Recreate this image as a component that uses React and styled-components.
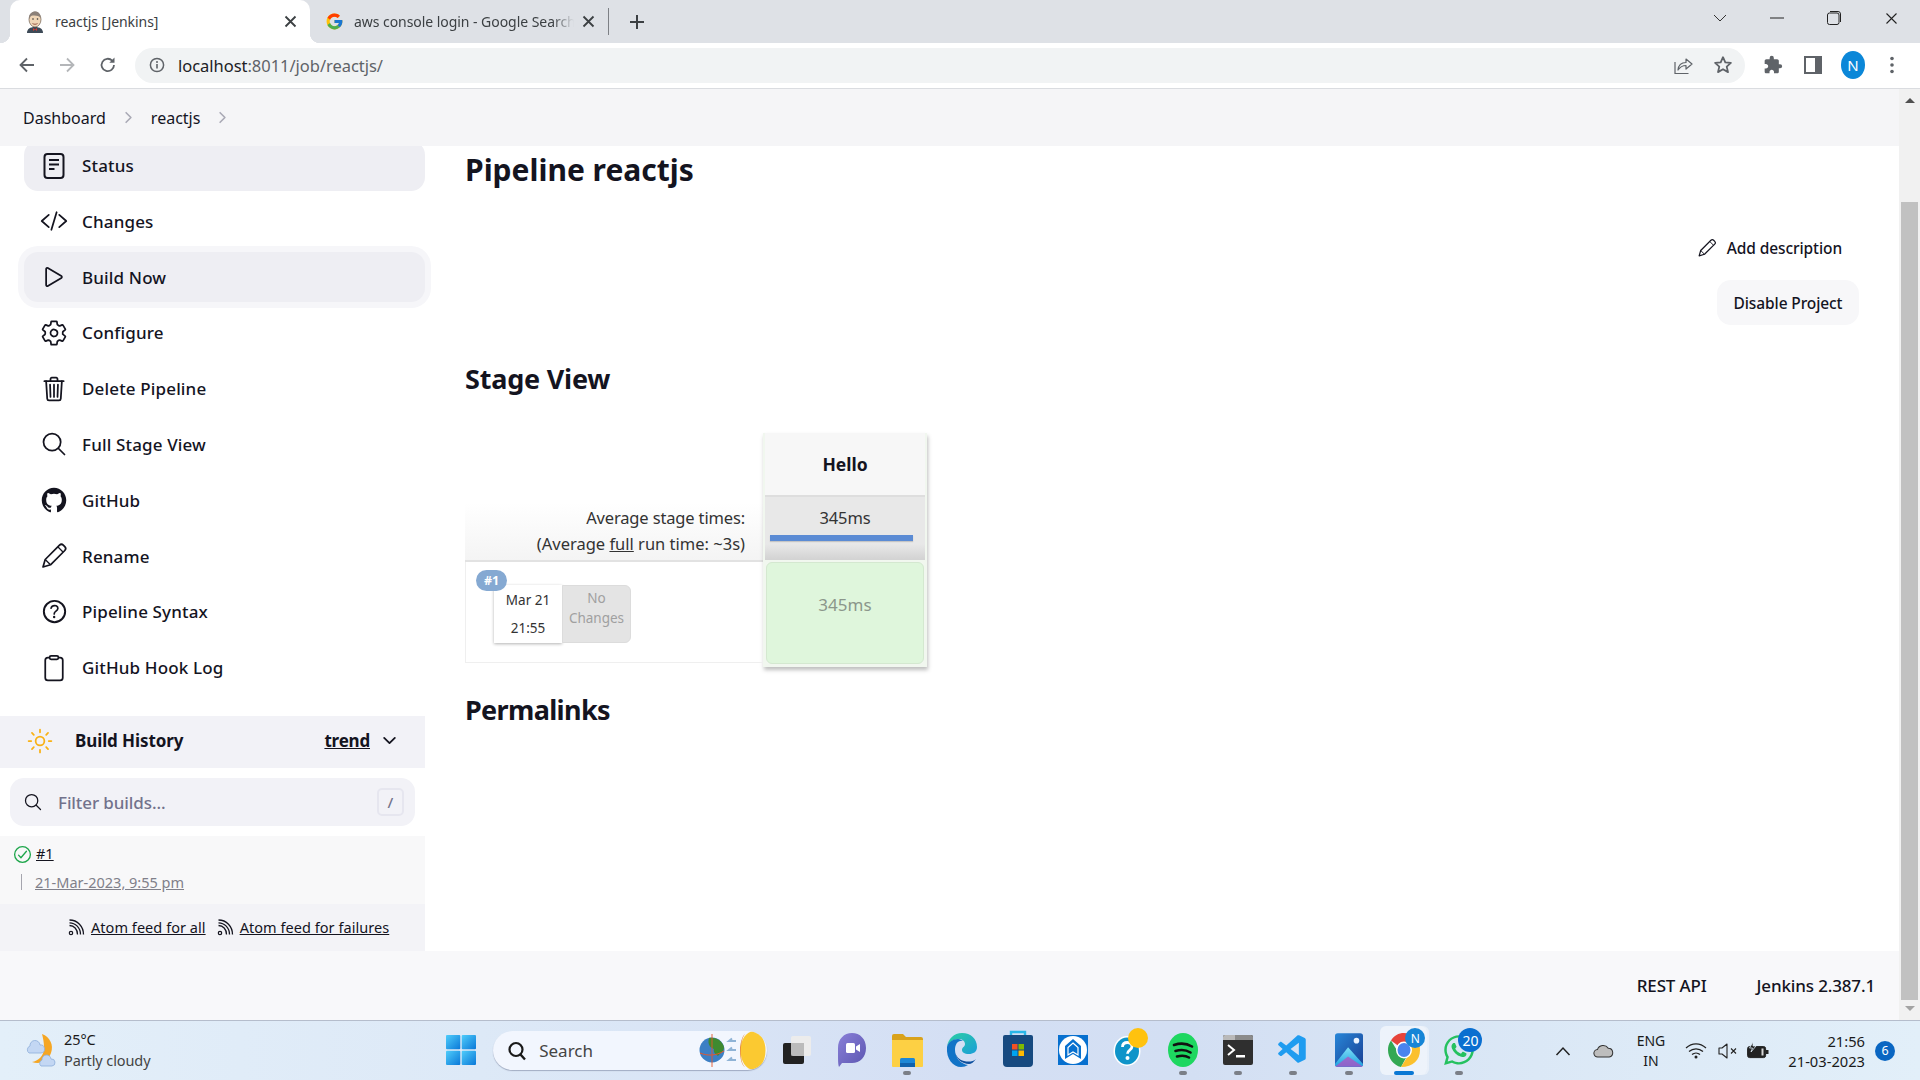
import React from "react";
import styled, { createGlobalStyle } from "styled-components";
import {
  IoCodeSlashOutline,
  IoPlayOutline,
  IoSettingsOutline,
  IoTrashOutline,
  IoSearchOutline,
  IoLogoGithub,
  IoHelpCircleOutline,
  IoClipboardOutline,
  IoChevronDownOutline,
  IoChevronForwardOutline,
  IoSunnyOutline,
  IoCheckmarkCircleOutline,
} from "react-icons/io5";
import { FcGoogle } from "react-icons/fc";
import { FaWhatsapp } from "react-icons/fa";
import { VscVscode } from "react-icons/vsc";

const FONT = `"Noto Sans", "Open Sans", Arial, sans-serif`;

const GlobalStyle = createGlobalStyle`
  html, body { margin: 0; padding: 0; background: #fff; }
  body { font-family: ${FONT}; color: #14141f; }
  * { box-sizing: border-box; }
`;

const Screen = styled.div`
  width: 1920px;
  height: 1080px;
  display: flex;
  flex-direction: column;
  overflow: hidden;
`;

/* browser chrome */
const TabStrip = styled.div`
  height: 43px;
  flex: none;
  background: #dee1e6;
  display: flex;
  align-items: center;
  padding-left: 10px;
  color: #3c4043;
`;

const Tab = styled.div`
  position: relative;
  width: ${(p) => p.$w}px;
  height: 43px;
  flex: none;
  display: flex;
  align-items: center;
  padding-left: ${(p) => p.$pad}px;
  font-size: 14px;
  letter-spacing: -0.05px;
  background: ${(p) => (p.$active ? "#fff" : "transparent")};
  border-radius: 10px 10px 0 0;
  ${(p) =>
    p.$active &&
    `
    &::before, &::after {
      content: "";
      position: absolute;
      bottom: 0;
      width: 10px;
      height: 10px;
    }
    &::before { left: -10px; background: radial-gradient(circle at 0 0, transparent 10px, #fff 10.5px); }
    &::after { right: -10px; background: radial-gradient(circle at 100% 0, transparent 10px, #fff 10.5px); }
  `}
`;

const TabIcon = styled.span`
  width: 20px;
  height: 20px;
  flex: none;
  display: flex;
  align-items: center;
  justify-content: center;
  margin-right: 10px;
`;

const TabTitle = styled.span`
  width: ${(p) => p.$w}px;
  white-space: nowrap;
  overflow: hidden;
  mask-image: ${(p) => (p.$fade ? "linear-gradient(90deg, #000 90%, transparent)" : "none")};
`;

const TabClose = styled.span`
  position: absolute;
  right: ${(p) => p.$r}px;
  top: 14px;
  width: 15px;
  height: 15px;
  display: flex;
`;

const TabDivider = styled.div`
  width: 1px;
  height: 27px;
  background: #7d8085;
  margin-left: -1px;
`;

const NewTab = styled.div`
  width: 18px;
  height: 18px;
  margin-left: 19px;
  display: flex;
`;

const WindowControls = styled.div`
  margin-left: auto;
  display: flex;
  align-items: center;
  height: 36px;
  align-self: flex-start;
`;

const WinButton = styled.span`
  width: ${(p) => p.$w || 57}px;
  display: flex;
  justify-content: center;
`;

const Toolbar = styled.div`
  height: 46px;
  flex: none;
  background: #fff;
  border-bottom: 1px solid #dadce0;
  display: flex;
  align-items: center;
  padding-left: 17px;
  padding-bottom: 1px;
`;

const NavButton = styled.span`
  width: ${(p) => p.$w}px;
  display: flex;
  align-items: center;
`;

const Omnibox = styled.div`
  width: 1610px;
  height: 35px;
  border-radius: 18px;
  background: #f1f3f4;
  display: flex;
  align-items: center;
  padding-left: 14px;
  font-size: 16.5px;
  letter-spacing: -0.03px;
  color: #5f6368;
`;

const UrlText = styled.span`
  margin-left: 13px;
`;

const Host = styled.span`
  color: #202124;
`;

const OmniRight = styled.div`
  margin-left: auto;
  display: flex;
  align-items: center;
  gap: 20px;
  padding-right: 12px;
`;

const ToolIcons = styled.div`
  display: flex;
  align-items: center;
  margin-left: 16px;
`;

const ToolSlot = styled.span`
  width: ${(p) => p.$w}px;
  display: flex;
  justify-content: center;
  align-items: center;
`;

const Avatar = styled.span`
  width: 28px;
  height: 28px;
  border-radius: 50%;
  background: #0b87d8;
  color: #fff;
  font-size: 15px;
  display: flex;
  align-items: center;
  justify-content: center;
`;

/* jenkins page */
const Viewport = styled.div`
  flex: 1;
  min-height: 0;
  display: flex;
`;

const Page = styled.div`
  flex: 1;
  min-width: 0;
  display: flex;
  flex-direction: column;
`;

const Scrollbar = styled.div`
  width: 21px;
  flex: none;
  background: #f1f1f1;
  display: flex;
  flex-direction: column;
  align-items: center;
  padding-top: 9px;
`;

const ScrollArrow = styled.div`
  width: 0;
  height: 0;
  border-left: 5px solid transparent;
  border-right: 5px solid transparent;
  ${(p) => (p.$down ? "border-top: 5px solid #a3a3a3;" : "border-bottom: 5px solid #505050;")}
`;

const ScrollThumb = styled.div`
  width: 17px;
  height: 798px;
  margin-top: 99px;
  margin-bottom: 6px;
  background: #c1c1c1;
`;

const Breadcrumbs = styled.div`
  height: 57px;
  flex: none;
  position: relative;
  z-index: 2;
  background: #f5f5f7;
  display: flex;
  align-items: center;
  padding-left: 23px;
  font-size: 16px;
  color: #14141f;
`;

const CrumbArrow = styled.span`
  display: flex;
  color: #a9a9b5;
  margin: 0 ${(p) => p.$r}px 0 ${(p) => p.$l}px;
  font-size: 17px;
`;

const Body = styled.div`
  flex: 1;
  min-height: 0;
  display: flex;
  overflow: hidden;
`;

const Sidebar = styled.aside`
  width: 425px;
  flex: none;
  display: flex;
  flex-direction: column;
`;

const SideNav = styled.nav`
  margin-top: -5.5px;
  padding-left: 24px;
  display: flex;
  flex-direction: column;
  gap: 5.8px;
`;

const SideRow = styled.div`
  height: 50px;
  display: flex;
  align-items: center;
  gap: 14px;
  padding-left: 16px;
  border-radius: 14px;
  font-size: 17px;
  font-weight: 500;
  letter-spacing: 0.15px;
  color: #14141f;
  background: ${(p) => (p.$on ? "#eeeef3" : "transparent")};
  box-shadow: ${(p) => (p.$halo ? "0 0 0 6px #f6f6f9" : "none")};
`;

const SideIcon = styled.span`
  width: 28px;
  height: 28px;
  flex: none;
  display: flex;
  align-items: center;
  justify-content: center;
  font-size: ${(p) => p.$size || 28}px;

  svg {
    flex: none;
  }
`;

const HistoryHead = styled.div`
  height: 52px;
  flex: none;
  margin-top: 23.3px;
  background: #f2f2f7;
  display: flex;
  align-items: center;
  padding: 0 0 2px 26px;
  font-size: 17px;
  font-weight: 700;
`;

const HistoryTitle = styled.span`
  margin-left: 21px;
  letter-spacing: -0.1px;
`;

const Trend = styled.span`
  margin-left: auto;
  text-decoration: underline;
  letter-spacing: -0.2px;
`;

const TrendArrow = styled.span`
  display: flex;
  margin: 0 26px 0 10px;
  font-size: 19px;
`;

const FilterBox = styled.div`
  height: 48px;
  flex: none;
  margin: 10px 10px 10px;
  border-radius: 14px;
  background: #f2f2f7;
  display: flex;
  align-items: center;
  padding: 0 11px 0 13px;
  font-size: 17px;
  font-weight: 500;
  color: #72728c;
`;

const FilterText = styled.span`
  margin: 2px 0 0 15px;
  letter-spacing: -0.1px;
`;

const Kbd = styled.span`
  margin-left: auto;
  width: 27px;
  height: 28px;
  border: 2px solid #e6e6ef;
  border-radius: 5px;
  font-size: 15px;
  display: flex;
  align-items: center;
  justify-content: center;
`;

const BuildRow = styled.div`
  height: 68px;
  flex: none;
  background: #f8f8f9;
  padding: 6px 0 0 12px;
  font-size: 14.5px;
`;

const BuildNumber = styled.div`
  display: flex;
  align-items: center;
  gap: 3px;
  height: 22px;
  text-decoration: underline;

  svg {
    margin-top: 3px;
  }
`;

const BuildDate = styled.div`
  margin: 10px 0 0 9px;
  padding-left: 13px;
  height: 16px;
  line-height: 16px;
  color: #80808a;
  text-decoration: underline;
  border-left: 1px solid #a5a5ae;
`;

const FeedRow = styled.div`
  height: 47px;
  flex: none;
  background: #f3f3f7;
  display: flex;
  align-items: center;
  padding: 0 0 1px 68px;
  font-size: 14.5px;
  letter-spacing: 0.05px;
`;

const FeedLink = styled.span`
  display: flex;
  align-items: center;
  margin-right: 11px;
  gap: 6px;
`;

const FeedText = styled.span`
  text-decoration: underline;
`;

const Main = styled.main`
  flex: 1;
  min-width: 0;
  padding: 4px 40px 0;
  display: flex;
  flex-direction: column;
`;

const Title = styled.h1`
  margin: 0;
  font-size: 30px;
  line-height: 40px;
  font-weight: 700;
`;

const AddDescription = styled.div`
  margin-top: 46px;
  height: 24px;
  align-self: flex-end;
  padding-right: 17px;
  display: flex;
  align-items: center;
  gap: 10px;
  font-size: 15.5px;
  font-weight: 500;
  letter-spacing: -0.1px;
`;

const DisableButton = styled.div`
  margin-top: 20px;
  align-self: flex-end;
  width: 142px;
  height: 45px;
  border-radius: 14px;
  background: #f7f7f9;
  display: flex;
  align-items: center;
  justify-content: center;
  font-size: 15.5px;
  font-weight: 500;
  letter-spacing: -0.1px;
`;

const Heading = styled.h2`
  margin: ${(p) => p.$top}px 0 0;
  font-size: 27px;
  line-height: 40px;
  font-weight: 700;
  letter-spacing: ${(p) => p.$ls}px;
`;

const StageTable = styled.div`
  margin-top: 34px;
  display: flex;
  width: 462px;
  height: 234px;
  color: #333;
`;

const StageLeft = styled.div`
  width: 298px;
  flex: none;
  display: flex;
  flex-direction: column;
`;

const Averages = styled.div`
  height: 129px;
  flex: none;
  display: flex;
  flex-direction: column;
  justify-content: flex-end;
  align-items: flex-end;
  padding: 0 18px 3px 0;
  font-size: 16.5px;
  line-height: 26px;
  letter-spacing: -0.15px;
  border-bottom: 2px solid #e2e2e2;
  background: linear-gradient(#fff 55%, #f4f4f4);
`;

const AverageFull = styled.span`
  letter-spacing: 0px;
`;

const Underlined = styled.span`
  text-decoration: underline;
`;

const BuildBox = styled.div`
  position: relative;
  height: 101px;
  flex: none;
  border-left: 1px solid #efefef;
  border-bottom: 1px solid #efefef;
  padding: 23px 0 0 28px;
  display: flex;
  align-items: flex-start;
`;

const BuildBadge = styled.span`
  position: absolute;
  left: 10px;
  top: 8px;
  width: 31px;
  height: 21px;
  border-radius: 11px;
  background: #85a9d2;
  color: #fff;
  font-size: 12.5px;
  font-weight: 700;
  display: flex;
  align-items: center;
  justify-content: center;
`;

const DateCard = styled.div`
  width: 68px;
  height: 58px;
  background: #fff;
  box-shadow: 0 1px 3px rgba(0, 0, 0, 0.3);
  font-size: 13.5px;
  text-align: center;
  padding-top: 1px;
  line-height: 28px;
`;

const ChangesCard = styled.div`
  width: 69px;
  height: 58px;
  background: #e4e4e4;
  border: 1px solid #dcdcdc;
  border-radius: 0 6px 6px 0;
  color: #a0a0a0;
  font-size: 13.5px;
  line-height: 20px;
  text-align: center;
  padding-top: 2px;
`;

const StageColumn = styled.div`
  width: 164px;
  flex: none;
  display: flex;
  flex-direction: column;
  background: #f1f7ef;
  box-shadow: 1px 3px 4px rgba(0, 0, 0, 0.26);
  padding: 0 2px 3px;
`;

const StageName = styled.div`
  height: 62px;
  flex: none;
  background: #f7f7f7;
  display: flex;
  align-items: center;
  justify-content: center;
  font-size: 17.5px;
  font-weight: 700;
  color: #14141f;
`;

const StageAverage = styled.div`
  height: 65px;
  flex: none;
  border-top: 2px solid #dedede;
  background: linear-gradient(#e8e8e8 75%, #d2d2d2);
  padding: 9px 5px 0;
  font-size: 16.5px;
  line-height: 24px;
  text-align: center;
  letter-spacing: -0.15px;
`;

const StageBar = styled.div`
  height: 6px;
  margin-top: 5px;
  width: 143px;
  background: #5b8bd4;
  box-shadow: 0 1px 1px rgba(0, 0, 0, 0.15);
`;

const StageCell = styled.div`
  flex: 1;
  margin: 2px 1px 0;
  border-radius: 6px;
  border: 1px solid #d4e8d0;
  background: #dff6dc;
  color: #8b968b;
  font-size: 17px;
  text-align: center;
  padding-top: 30px;
  letter-spacing: 0.1px;
`;

const Footer = styled.footer`
  height: 69px;
  flex: none;
  background: #f8f8fa;
  display: flex;
  align-items: center;
  justify-content: flex-end;
  padding: 0 24px 0 0;
  gap: 50px;
  font-size: 17px;
  font-weight: 500;
  letter-spacing: -0.15px;
`;

/* windows taskbar */
const Taskbar = styled.div`
  height: 60px;
  flex: none;
  display: flex;
  align-items: center;
  border-top: 1px solid #b5bdcc;
  background: linear-gradient(90deg, #e3eff9 0%, #dde9f7 25%, #d4dff4 50%, #d3dff3 62%, #dbe8f6 80%, #e2eff9 100%);
  color: #1a1a1a;
`;

const Weather = styled.div`
  width: 433px;
  flex: none;
  display: flex;
  align-items: center;
  padding-left: 25px;
  gap: 5px;
`;

const WeatherText = styled.div`
  font-size: 14.5px;
  line-height: 21px;
  letter-spacing: -0.1px;
  margin-top: -2px;
`;

const WeatherSub = styled.div`
  color: #444;
`;

const Slot = styled.div`
  position: relative;
  width: 55.2px;
  height: 59px;
  flex: none;
  display: flex;
  align-items: center;
  justify-content: center;
  padding-bottom: 2px;
`;

const SlotIcon = styled.span`
  position: relative;
  display: flex;
`;

const ActiveBack = styled.span`
  position: absolute;
  left: 4px;
  right: 4px;
  top: 5px;
  bottom: 5px;
  border-radius: 6px;
  background: rgba(255, 255, 255, 0.55);
  box-shadow: 2px 0 0 rgba(255, 255, 255, 0.4);
`;

const RunDot = styled.span`
  position: absolute;
  bottom: 5px;
  left: 50%;
  transform: translateX(-50%);
  width: ${(p) => (p.$active ? 20 : 8)}px;
  height: 4px;
  border-radius: 2px;
  background: ${(p) => (p.$active ? "#0a78d4" : "#7b7f87")};
`;

const IconBadge = styled.span`
  position: absolute;
  left: ${(p) => p.$l}px;
  top: ${(p) => p.$t}px;
  width: ${(p) => p.$size}px;
  height: ${(p) => p.$size}px;
  border-radius: 50%;
  background: ${(p) => p.$bg};
  color: #fff;
  font-size: ${(p) => p.$font || 12}px;
  display: flex;
  align-items: center;
  justify-content: center;
`;

const SearchPill = styled.div`
  width: 274px;
  height: 39px;
  margin: 0 2px 0 5px;
  flex: none;
  border-radius: 20px;
  background: #f2f6fe;
  box-shadow: 0 1px 1px rgba(90, 100, 130, 0.45);
  display: flex;
  align-items: center;
  padding-left: 14px;
  font-size: 17px;
  color: #444;
  overflow: hidden;
`;

const PillLabel = styled.span`
  margin-left: 12px;
`;

const PillArt = styled.span`
  margin-left: auto;
  display: flex;
`;

const Tray = styled.div`
  margin-left: auto;
  display: flex;
  align-items: center;
  padding-right: 25px;
`;

const TraySlot = styled.span`
  width: ${(p) => p.$w}px;
  display: flex;
  justify-content: center;
  align-items: center;
`;

const Lang = styled.span`
  width: 56px;
  text-align: center;
  font-size: 14px;
  line-height: 20px;
`;

const Clock = styled.div`
  width: 91px;
  text-align: right;
  font-size: 14.7px;
  line-height: 20px;
`;

const Notif = styled.span`
  width: 20px;
  height: 20px;
  margin-left: 10px;
  border-radius: 50%;
  background: #0a66c2;
  color: #fff;
  font-size: 12.5px;
  display: flex;
  align-items: center;
  justify-content: center;
`;

/* drawings */
const JenkinsFace = () => (
  <svg width="22" height="24" viewBox="0 0 20 22">
    <path d="M2 22c0-4 3-6 8-6s8 2 8 6z" fill="#3d4a57" />
    <path d="M8 17l2 1.500 2-1.500 0 3-2-1.500-2 1.500z" fill="#d33833" />
    <ellipse cx="10" cy="8.500" rx="6" ry="7.500" fill="#f0d6b7" stroke="#6b5b4f" strokeWidth=".7" />
    <path d="M4 8C3.500 2 8 0 11 .5s5 3 4.500 6.500C14 4.500 9 4 6 5z" fill="#8c8179" />
    <path d="M7.500 12.500c1.500 1 3.500 1 5 0" fill="none" stroke="#8c4a3a" strokeWidth=".9" />
    <circle cx="8" cy="8" r=".8" fill="#333" />
    <circle cx="12.500" cy="8" r=".8" fill="#333" />
  </svg>
);

const CrossIcon = ({ size = 15, color = "#3c4043", w = 1.8 }) => (
  <svg width={size} height={size} viewBox="0 0 15 15">
    <path d="M2.500 2.500l10 10M12.500 2.500l-10 10" stroke={color} strokeWidth={w} fill="none" />
  </svg>
);

const ArrowIcon = ({ color, flip }) => (
  <svg width="20" height="20" viewBox="0 0 20 20" style={flip ? { transform: "scaleX(-1)" } : undefined}>
    <path d="M17 10H4M10 3.500L3.500 10l6.500 6.500" fill="none" stroke={color} strokeWidth="1.800" />
  </svg>
);

const ReloadIcon = () => (
  <svg width="20" height="20" viewBox="0 0 20 20">
    <path d="M16 10a6.200 6.200 0 1 1-1.800-4.400" fill="none" stroke="#5f6368" strokeWidth="1.800" />
    <path d="M16.500 2.500v5.200h-5.200z" fill="#5f6368" />
  </svg>
);

const InfoIcon = () => (
  <svg width="16" height="16" viewBox="0 0 16 16">
    <circle cx="8" cy="8" r="6.600" fill="none" stroke="#5f6368" strokeWidth="1.500" />
    <path d="M8 7v4.500" stroke="#5f6368" strokeWidth="1.600" />
    <circle cx="8" cy="4.900" r="1" fill="#5f6368" />
  </svg>
);

const ShareIcon = () => (
  <svg width="20" height="20" viewBox="0 0 20 20">
    <path d="M2 7v11.500h13.500" fill="none" stroke="#5f6368" strokeWidth="1.200" />
    <path d="M5 15c.5-5 4-7.500 8-7.500V4l6 5-6 5v-3.500c-3.500 0-6 1.500-8 4.500z" fill="none" stroke="#5f6368" strokeWidth="1.200" strokeLinejoin="round" />
  </svg>
);

const StarIcon = () => (
  <svg width="20" height="20" viewBox="0 0 20 20">
    <path d="M10 2.200l2.300 5.200 5.600.5-4.200 3.700 1.300 5.500L10 14.200l-5 2.900 1.300-5.500L2.100 7.900l5.600-.5z" fill="none" stroke="#5f6368" strokeWidth="1.800" strokeLinejoin="round" />
  </svg>
);

const PuzzleIcon = () => (
  <svg width="20" height="20" viewBox="0 0 24 24">
    <path d="M20.500 11H19V7c0-1.100-.9-2-2-2h-4V3.500a2.500 2.500 0 0 0-5 0V5H4c-1.100 0-2 .9-2 2v3.800h1.500c1.500 0 2.700 1.200 2.700 2.700S5 16.200 3.500 16.200H2V20c0 1.100.9 2 2 2h3.800v-1.500c0-1.500 1.200-2.700 2.700-2.700s2.700 1.200 2.700 2.700V22H17c1.100 0 2-.9 2-2v-4h1.500a2.500 2.500 0 0 0 0-5z" fill="#5f6368" />
  </svg>
);

const SidePanelIcon = () => (
  <svg width="18" height="18" viewBox="0 0 18 18">
    <rect x="0" y="0" width="18" height="18" fill="#5f6368" />
    <rect x="2" y="2" width="9" height="14" fill="#fff" />
  </svg>
);

const DotsIcon = () => (
  <svg width="6" height="18" viewBox="0 0 6 18">
    <circle cx="3" cy="2.500" r="1.800" fill="#5f6368" />
    <circle cx="3" cy="9" r="1.800" fill="#5f6368" />
    <circle cx="3" cy="15.500" r="1.800" fill="#5f6368" />
  </svg>
);

const StatusIcon = () => (
  <svg width="28" height="28" viewBox="0 0 28 28">
    <rect x="4.500" y="2" width="19" height="24" rx="3" fill="none" stroke="#14141f" strokeWidth="2" />
    <path d="M9 8h10M9 12.500h10M9 17h5.500" stroke="#14141f" strokeWidth="1.800" />
  </svg>
);

const PencilIcon = ({ size = 28 }) => (
  <svg width={size} height={size} viewBox="0 0 28 28">
    <path d="M3 25l2.200-7.500L19.500 3.200a2.700 2.700 0 0 1 3.800 0l1.500 1.500a2.700 2.700 0 0 1 0 3.800L10.500 22.800z" fill="none" stroke="#14141f" strokeWidth="1.700" strokeLinejoin="round" />
    <path d="M5.200 17.500l5.300 5.300M18 5l5 5" fill="none" stroke="#14141f" strokeWidth="1.300" />
  </svg>
);

const RssIcon = () => (
  <svg width="17" height="18" viewBox="0 0 17 18">
    <circle cx="3" cy="15" r="1.700" fill="none" stroke="#14141f" strokeWidth="1.200" />
    <path d="M1.500 7.500c4.500 0 8 3.500 8 9M1.500 2c8 0 14 6.500 14 14.500M1.500 4.800c6 0 11 5 11 11.700" fill="none" stroke="#14141f" strokeWidth="1.300" />
  </svg>
);

const WeatherIcon = () => (
  <svg width="34" height="36" viewBox="0 0 34 36">
    <path d="M17 1c8 3 12 11 9 19s-11 12-19 9c6-1 12-6 12-14 0-6-1-10-2-14z" fill="#f5a623" />
    <path d="M5 13a5 5 0 0 1 10-1 4 4 0 0 1 1 8H4a4 4 0 0 1 1-7z" fill="#c3d7f3" stroke="#8eaedb" strokeWidth=".8" />
    <path d="M17 27a4.500 4.500 0 0 1 9-1 3.500 3.500 0 0 1 1 7H16a3.500 3.500 0 0 1 1-6z" fill="#c3d7f3" stroke="#8eaedb" strokeWidth=".8" />
  </svg>
);

const WinLogo = () => (
  <svg width="30" height="30" viewBox="0 0 30 30">
    <defs>
      <linearGradient id="winA" x1="0" y1="0" x2="1" y2="1">
        <stop offset="0" stopColor="#4fcdfb" />
        <stop offset="1" stopColor="#0a78d8" />
      </linearGradient>
    </defs>
    <rect x="0" y="0" width="14.300" height="14.300" rx="1" fill="url(#winA)" />
    <rect x="15.700" y="0" width="14.300" height="14.300" rx="1" fill="url(#winA)" />
    <rect x="0" y="15.700" width="14.300" height="14.300" rx="1" fill="url(#winA)" />
    <rect x="15.700" y="15.700" width="14.300" height="14.300" rx="1" fill="url(#winA)" />
  </svg>
);

const SearchGlyph = () => (
  <svg width="20" height="20" viewBox="0 0 20 20">
    <circle cx="9" cy="8.500" r="6.500" fill="none" stroke="#1a1a1a" strokeWidth="2.200" />
    <path d="M13.500 13.500l4.500 5" stroke="#1a1a1a" strokeWidth="2.400" />
  </svg>
);

const GlobeSun = () => (
  <svg width="68" height="39" viewBox="0 0 68 39">
    <circle cx="13" cy="19" r="12.500" fill="#3c7fc4" />
    <path d="M10 7c6-1 13 2 15 9 0 5-4 6-6 9-2-2-5-3-4-7-3-1-7-4-5-11z" fill="#3f8a2f" />
    <path d="M13 3v33" stroke="#e4572e" strokeWidth=".9" />
    <path d="M1 22c7 3 16 3 24-2" fill="none" stroke="#e4572e" strokeWidth="1" />
    <path d="M37 10h-7l3-2.500M37 19h-7l3-2.500M37 29h-7l3-2.500" fill="none" stroke="#8fb3d6" strokeWidth="2" />
    <ellipse cx="54" cy="19.500" rx="12.500" ry="19" fill="#fbc931" />
    <path d="M46 3c-5 5-6 28 0 33-3-1-5-9-5-16s2-15 5-17z" fill="#e8842a" />
  </svg>
);

const TaskViewIcon = () => (
  <svg width="30" height="30" viewBox="0 0 30 30">
    <rect x="1" y="8" width="21" height="21" rx="2" fill="#222" />
    <rect x="9" y="1" width="20" height="20" rx="2" fill="#ececec" />
    <rect x="9" y="8" width="13" height="13" fill="#8a8a8a" opacity=".5" />
  </svg>
);

const MeetIcon = () => (
  <svg width="30" height="36" viewBox="0 0 30 36">
    <defs>
      <linearGradient id="meetA" x1="0" y1="0" x2="1" y2="1">
        <stop offset="0" stopColor="#8a80d8" />
        <stop offset="1" stopColor="#5b55b0" />
      </linearGradient>
    </defs>
    <path d="M15 1c8 0 14 6 14 15s-6 15-14 15H5l-3 4c-1-3-1-6-1-19C1 7 7 1 15 1z" fill="url(#meetA)" />
    <rect x="9" y="11" width="9" height="10" rx="1.500" fill="#fff" />
    <path d="M19 14.500l4-2.500v8l-4-2.500z" fill="#fff" />
  </svg>
);

const FolderIcon = () => (
  <svg width="31" height="36" viewBox="0 0 31 36">
    <path d="M0 4a2 2 0 0 1 2-2h9l3 3h15a2 2 0 0 1 2 2v4H0z" fill="#d9a21b" />
    <path d="M0 8h31v26a1 1 0 0 1-1 1H1a1 1 0 0 1-1-1z" fill="#fdd044" />
    <rect x="8" y="26" width="15" height="6" rx="1.500" fill="#1c87d6" />
    <rect x="8" y="31" width="15" height="4" fill="#0f62ad" />
  </svg>
);

const EdgeIcon = () => (
  <svg width="32" height="36" viewBox="0 0 32 36">
    <defs>
      <linearGradient id="edgeA" x1="0" y1="0" x2="1" y2="1">
        <stop offset="0" stopColor="#2ccfa3" />
        <stop offset="1" stopColor="#1a9ed8" />
      </linearGradient>
    </defs>
    <path d="M16 1c9 0 15 6 15 14 0 5-4 7-8 7-5 0-7-2-7-4 0-3 3-3 3-6 0-3-3-5-6-5C8 7 2 10 1 15 2 7 8 1 16 1z" fill="url(#edgeA)" />
    <path d="M1 15c1-5 6-8 11-8 2 0 4 1 5 2-5-1-8 3-8 9 0 8 6 14 13 15-2 1-4 2-7 2C7 35 0 27 1 15z" fill="#1173c7" />
    <path d="M9 20c1 7 7 12 14 12 2 0 5-2 7-5-3 3-8 3-12 2-5-1-8-5-9-9z" fill="#0c4f9e" />
  </svg>
);

const StoreIcon = () => (
  <svg width="30" height="40" viewBox="0 0 30 40">
    <path d="M8 6V2h14v4" fill="none" stroke="#29b6e8" strokeWidth="2.400" />
    <path d="M0 7a2 2 0 0 1 2-2h26a2 2 0 0 1 2 2v26a4 4 0 0 1-4 4H4a4 4 0 0 1-4-4z" fill="#174a80" />
    <rect x="9" y="14" width="5.500" height="5.500" fill="#f25022" />
    <rect x="15.500" y="14" width="5.500" height="5.500" fill="#7fba00" />
    <rect x="9" y="20.500" width="5.500" height="5.500" fill="#00a4ef" />
    <rect x="15.500" y="20.500" width="5.500" height="5.500" fill="#ffb900" />
  </svg>
);

const ShieldAppIcon = () => (
  <svg width="30" height="30" viewBox="0 0 30 30">
    <rect width="30" height="30" fill="#0770cf" />
    <circle cx="15" cy="15" r="14" fill="#fff" />
    <path d="M15 4l8 7v13l-8-5-8 5V11z" fill="#0770cf" />
    <path d="M15 8l5 4.500V20l-5-3-5 3v-7.500z" fill="#0770cf" stroke="#fff" strokeWidth="1.200" />
  </svg>
);

const HelpIcon = () => (
  <svg width="30" height="34" viewBox="0 0 30 34">
    <ellipse cx="14" cy="18" rx="13.500" ry="15" fill="#fff" />
    <ellipse cx="14" cy="18" rx="12" ry="13.500" fill="#0f94c9" />
    <path d="M9.500 14c0-3 2-4.500 5-4.500s4.500 2 4.500 4-1 2.800-2.500 3.800-2 1.800-2 3.500" fill="none" stroke="#fff" strokeWidth="2.800" />
    <circle cx="14.500" cy="25" r="2" fill="#fff" />
  </svg>
);

const SpotifyIcon = () => (
  <svg width="30" height="34" viewBox="0 0 30 34">
    <ellipse cx="15" cy="17" rx="15" ry="17" fill="#1ed760" />
    <path d="M6 12c6-2 13-1.500 18 1.500M7.500 18c5-1.500 11-1 15 1.500M9 23.500c4-1 9-.8 12 1" fill="none" stroke="#111" strokeWidth="2.600" strokeLinecap="round" />
  </svg>
);

const TerminalIcon = () => (
  <svg width="30" height="30" viewBox="0 0 30 30">
    <rect width="30" height="30" rx="2" fill="#2f2f2f" />
    <path d="M0 2a2 2 0 0 1 2-2h10v5H0z" fill="#b9b9b9" />
    <path d="M12 0h16a2 2 0 0 1 2 2v3H12z" fill="#8b8b8b" />
    <path d="M5 10l6 5-6 5" fill="none" stroke="#fff" strokeWidth="2" />
    <rect x="13" y="20" width="9" height="2.500" fill="#fff" />
  </svg>
);

const PhotosIcon = () => (
  <svg width="28" height="34" viewBox="0 0 30 36">
    <defs>
      <linearGradient id="phA" x1="0" y1="0" x2="1" y2="1">
        <stop offset="0" stopColor="#2786d8" />
        <stop offset="1" stopColor="#1a3f93" />
      </linearGradient>
      <linearGradient id="phB" x1="0" y1="0" x2="0" y2="1">
        <stop offset="0" stopColor="#7ee0f7" />
        <stop offset="1" stopColor="#1e9fe0" />
      </linearGradient>
    </defs>
    <rect width="30" height="36" rx="3" fill="url(#phA)" />
    <path d="M0 33l14-18 16 18v0a3 3 0 0 1-3 3H3a3 3 0 0 1-3-3z" fill="url(#phB)" />
    <path d="M0 36l14-11 16 11z" fill="#b14fc2" opacity=".75" />
    <circle cx="23" cy="8" r="3" fill="#eaf3ff" />
  </svg>
);

const ChromeIcon = () => (
  <svg width="32" height="36" viewBox="0 0 32 36">
    <path d="M16 18L3 8.500C6 3.500 10.500 1 16 1c6.500 0 11.500 3.500 14 9H16z" fill="#e6443a" />
    <path d="M16 18l-6 2L3 8.500C.5 12 0 15 0 18c0 8 5.500 15.500 13 17l6-11z" fill="#33a853" />
    <path d="M16 10h14c1.500 3 2 5.500 2 8 0 10-7 17-19 17l8-13c1-1.500 1.500-3 1-5-.5-3-3-6-6-7z" fill="#fbc02d" />
    <ellipse cx="16" cy="18" rx="8" ry="8.500" fill="#fff" />
    <ellipse cx="16" cy="18" rx="6.500" ry="7" fill="#4a84ee" />
  </svg>
);

const CloudTray = () => (
  <svg width="21" height="15" viewBox="0 0 22 16">
    <path d="M5 15a4 4 0 0 1-.5-8A6.500 6.500 0 0 1 16 5.500a4.800 4.800 0 0 1 1 9.500z" fill="#bdbdbd" stroke="#333" strokeWidth="1.100" />
  </svg>
);

const WifiTray = () => (
  <svg width="22" height="17" viewBox="0 0 22 17">
    <path d="M1 6c6-5.500 14-5.500 20 0M4 9.500c4-3.600 10-3.600 14 0M7 12.500c2.300-2 5.700-2 8 0" fill="none" stroke="#222" strokeWidth="1.200" />
    <circle cx="11" cy="15" r="1.500" fill="#222" />
  </svg>
);

const MuteTray = () => (
  <svg width="20" height="16" viewBox="0 0 20 16">
    <path d="M1 5h3l5-4v14l-5-4H1z" fill="none" stroke="#222" strokeWidth="1.100" strokeLinejoin="round" />
    <path d="M13 5.500l5 5M18 5.500l-5 5" stroke="#222" strokeWidth="1.100" />
  </svg>
);

const BatteryTray = () => (
  <svg width="22" height="18" viewBox="0 0 22 18">
    <rect x=".6" y="4.600" width="18" height="11" rx="2" fill="#222" stroke="#222" />
    <rect x="14.500" y="6.500" width="2" height="7" fill="#d8d8d8" />
    <rect x="19" y="8" width="2.500" height="4" fill="#222" />
    <path d="M6 0L2.500 6h3L4 10l5-6H6z" fill="#222" stroke="#e0edf8" strokeWidth=".8" />
  </svg>
);

const navItems = [
  { label: "Status", icon: <StatusIcon />, on: true },
  { label: "Changes", icon: <IoCodeSlashOutline /> },
  { label: "Build Now", icon: <IoPlayOutline />, on: true, halo: true },
  { label: "Configure", icon: <IoSettingsOutline /> },
  { label: "Delete Pipeline", icon: <IoTrashOutline /> },
  { label: "Full Stage View", icon: <IoSearchOutline /> },
  { label: "GitHub", icon: <IoLogoGithub /> },
  { label: "Rename", icon: <PencilIcon /> },
  { label: "Pipeline Syntax", icon: <IoHelpCircleOutline />, size: 31 },
  { label: "GitHub Hook Log", icon: <IoClipboardOutline /> },
];

const dockApps = [
  { key: "task", icon: <TaskViewIcon /> },
  { key: "meet", icon: <MeetIcon /> },
  { key: "files", icon: <FolderIcon />, run: true },
  { key: "edge", icon: <EdgeIcon /> },
  { key: "store", icon: <StoreIcon /> },
  { key: "shield", icon: <ShieldAppIcon /> },
  { key: "help", icon: <HelpIcon />, badge: { l: 28, t: 7, size: 20, bg: "#ffc20e" } },
  { key: "spotify", icon: <SpotifyIcon />, run: true },
  { key: "term", icon: <TerminalIcon />, run: true },
  { key: "code", icon: <VscVscode size={34} color="#1f9cf0" />, run: true },
  { key: "photos", icon: <PhotosIcon />, run: true },
  { key: "chrome", icon: <ChromeIcon />, active: true, badge: { l: 29, t: 7, size: 20, bg: "#1685d6", text: "N" } },
  { key: "whatsapp", icon: <FaWhatsapp size={34} color="#25c15f" />, run: true, badge: { l: 27, t: 7, size: 24, bg: "#0a6fd0", text: "20", font: 14 } },
];

export default function App() {
  return (
    <Screen>
      <GlobalStyle />
      <TabStrip>
        <Tab $active $w={300} $pad={15}>
          <TabIcon><JenkinsFace /></TabIcon>
          <TabTitle $w={200}>reactjs [Jenkins]</TabTitle>
          <TabClose $r={12}><CrossIcon /></TabClose>
        </Tab>
        <Tab $w={299} $pad={14}>
          <TabIcon><FcGoogle size={19} /></TabIcon>
          <TabTitle $w={220} $fade>aws console login - Google Search</TabTitle>
          <TabClose $r={13}><CrossIcon /></TabClose>
        </Tab>
        <TabDivider />
        <NewTab>
          <svg width="18" height="18" viewBox="0 0 18 18">
            <path d="M9 2v14M2 9h14" stroke="#3c4043" strokeWidth="2" />
          </svg>
        </NewTab>
        <WindowControls>
          <WinButton>
            <svg width="14" height="8" viewBox="0 0 14 8"><path d="M1 1l6 6 6-6" fill="none" stroke="#333" /></svg>
          </WinButton>
          <WinButton>
            <svg width="14" height="2" viewBox="0 0 14 2"><path d="M0 1h14" stroke="#222" /></svg>
          </WinButton>
          <WinButton>
            <svg width="14" height="14" viewBox="0 0 14 14">
              <rect x=".5" y="2" width="11.500" height="11.500" rx="2" fill="none" stroke="#222" />
              <path d="M3 .5h8a2.500 2.500 0 0 1 2.500 2.500v8" fill="none" stroke="#222" />
            </svg>
          </WinButton>
          <WinButton $w={58}><CrossIcon size={15} color="#222" w={1.100} /></WinButton>
        </WindowControls>
      </TabStrip>

      <Toolbar>
        <NavButton $w={40}><ArrowIcon color="#5f6368" /></NavButton>
        <NavButton $w={41}><ArrowIcon color="#b4b6b9" flip /></NavButton>
        <NavButton $w={37}><ReloadIcon /></NavButton>
        <Omnibox>
          <InfoIcon />
          <UrlText>
            <Host>localhost</Host>:8011/job/reactjs/
          </UrlText>
          <OmniRight>
            <ShareIcon />
            <StarIcon />
          </OmniRight>
        </Omnibox>
        <ToolIcons>
          <ToolSlot $w={24}><PuzzleIcon /></ToolSlot>
          <ToolSlot $w={56}><SidePanelIcon /></ToolSlot>
          <ToolSlot $w={24}><Avatar>N</Avatar></ToolSlot>
          <ToolSlot $w={54}><DotsIcon /></ToolSlot>
        </ToolIcons>
      </Toolbar>

      <Viewport>
        <Page>
          <Breadcrumbs>
            <span>Dashboard</span>
            <CrumbArrow $l={14} $r={14}><IoChevronForwardOutline /></CrumbArrow>
            <span>reactjs</span>
            <CrumbArrow $l={14} $r={0}><IoChevronForwardOutline /></CrumbArrow>
          </Breadcrumbs>
          <Body>
            <Sidebar>
              <SideNav>
                {navItems.map(({ label, icon, on, halo, size }) => (
                  <SideRow key={label} $on={on} $halo={halo}>
                    <SideIcon $size={size}>{icon}</SideIcon>
                    {label}
                  </SideRow>
                ))}
              </SideNav>
              <HistoryHead>
                <SideIcon><IoSunnyOutline color="#f9b115" /></SideIcon>
                <HistoryTitle>Build History</HistoryTitle>
                <Trend>trend</Trend>
                <TrendArrow><IoChevronDownOutline /></TrendArrow>
              </HistoryHead>
              <FilterBox>
                <IoSearchOutline size={20} color="#14141f" />
                <FilterText>Filter builds...</FilterText>
                <Kbd>/</Kbd>
              </FilterBox>
              <BuildRow>
                <BuildNumber>
                  <IoCheckmarkCircleOutline size={21} color="#1ea64b" />
                  #1
                </BuildNumber>
                <BuildDate>21-Mar-2023, 9:55 pm</BuildDate>
              </BuildRow>
              <FeedRow>
                <FeedLink><RssIcon /><FeedText>Atom feed for all</FeedText></FeedLink>
                <FeedLink><RssIcon /><FeedText>Atom feed for failures</FeedText></FeedLink>
              </FeedRow>
            </Sidebar>
            <Main>
              <Title>Pipeline reactjs</Title>
              <AddDescription>
                <PencilIcon size={20} />
                Add description
              </AddDescription>
              <DisableButton>Disable Project</DisableButton>
              <Heading $top={34} $ls={-0.2}>Stage View</Heading>
              <StageTable>
                <StageLeft>
                  <Averages>
                    <span>Average stage times:</span>
                    <AverageFull>(Average <Underlined>full</Underlined> run time: ~3s)</AverageFull>
                  </Averages>
                  <BuildBox>
                    <BuildBadge>#1</BuildBadge>
                    <DateCard>Mar 21<br />21:55</DateCard>
                    <ChangesCard>No<br />Changes</ChangesCard>
                  </BuildBox>
                </StageLeft>
                <StageColumn>
                  <StageName>Hello</StageName>
                  <StageAverage>
                    345ms
                    <StageBar />
                  </StageAverage>
                  <StageCell>345ms</StageCell>
                </StageColumn>
              </StageTable>
              <Heading $top={23} $ls={-0.65}>Permalinks</Heading>
            </Main>
          </Body>
          <Footer>
            <span>REST API</span>
            <span>Jenkins 2.387.1</span>
          </Footer>
        </Page>
        <Scrollbar>
          <ScrollArrow />
          <ScrollThumb />
          <ScrollArrow $down />
        </Scrollbar>
      </Viewport>

      <Taskbar>
        <Weather>
          <WeatherIcon />
          <WeatherText>
            25°C
            <WeatherSub>Partly cloudy</WeatherSub>
          </WeatherText>
        </Weather>
        <Slot><WinLogo /></Slot>
        <SearchPill>
          <SearchGlyph />
          <PillLabel>Search</PillLabel>
          <PillArt><GlobeSun /></PillArt>
        </SearchPill>
        {dockApps.map((app) => (
          <Slot key={app.key}>
            {app.active && <ActiveBack />}
            <SlotIcon>{app.icon}</SlotIcon>
            {app.badge && (
              <IconBadge $l={app.badge.l} $t={app.badge.t} $size={app.badge.size} $bg={app.badge.bg} $font={app.badge.font}>
                {app.badge.text}
              </IconBadge>
            )}
            {(app.run || app.active) && <RunDot $active={app.active} />}
          </Slot>
        ))}
        <Tray>
          <TraySlot $w={40}>
            <svg width="16" height="10" viewBox="0 0 16 10"><path d="M1.500 9L8 2l6.500 7" fill="none" stroke="#222" strokeWidth="1.500" /></svg>
          </TraySlot>
          <TraySlot $w={40}><CloudTray /></TraySlot>
          <Lang>ENG<br />IN</Lang>
          <TraySlot $w={34}><WifiTray /></TraySlot>
          <TraySlot $w={29}><MuteTray /></TraySlot>
          <TraySlot $w={32}><BatteryTray /></TraySlot>
          <Clock>21:56<br />21-03-2023</Clock>
          <Notif>6</Notif>
        </Tray>
      </Taskbar>
    </Screen>
  );
}
